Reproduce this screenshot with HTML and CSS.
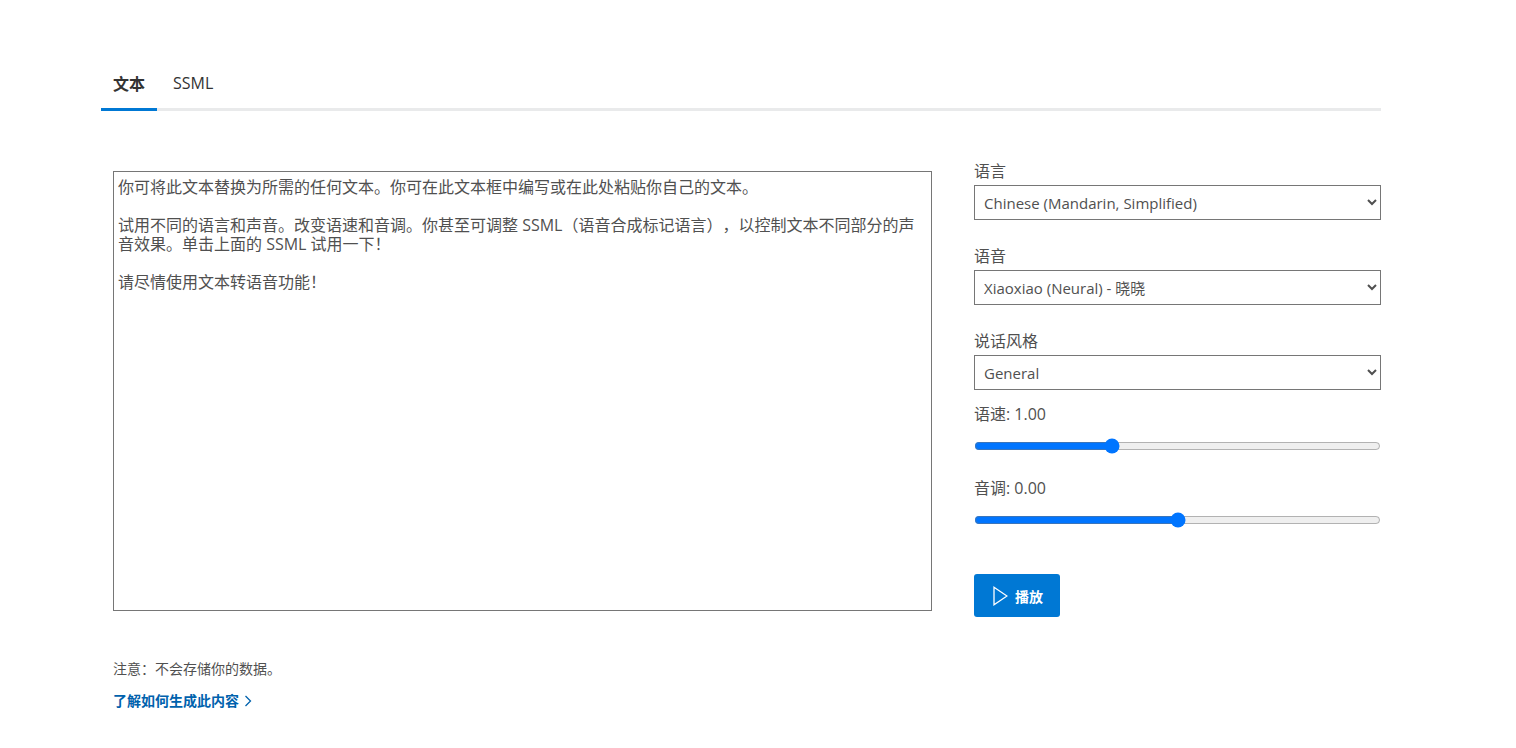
FILE: index.html
```html
<!DOCTYPE html>
<html lang="zh-CN">
<head>
<meta charset="utf-8">
<meta name="viewport" content="width=device-width, initial-scale=1">
<title>文本转语音</title>
<link rel="stylesheet" href="styles.css">
</head>
<body>
<main class="demo">
  <div class="tabs" role="tablist">
    <button class="tab tab-active" type="button" role="tab" aria-selected="true">文本</button>
    <button class="tab" type="button" role="tab" aria-selected="false">SSML</button>
  </div>
  <div class="panel">
    <textarea class="editor" aria-label="文本">你可将此文本替换为所需的任何文本。你可在此文本框中编写或在此处粘贴你自己的文本。

试用不同的语言和声音。改变语速和音调。你甚至可调整 SSML（语音合成标记语言），以控制文本不同部分的声音效果。单击上面的 SSML 试用一下！

请尽情使用文本转语音功能！</textarea>
    <form class="controls">
      <div class="fields">
        <div class="field">
          <label for="language">语言</label>
          <select id="language"><option>Chinese (Mandarin, Simplified)</option></select>
        </div>
        <div class="field">
          <label for="voice">语音</label>
          <select id="voice"><option>Xiaoxiao (Neural) - 晓晓</option></select>
        </div>
        <div class="field">
          <label for="style">说话风格</label>
          <select id="style"><option>General</option></select>
        </div>
      </div>
      <div class="sliders">
        <div class="slider">
          <label for="speed">语速: 1.00</label>
          <input id="speed" type="range" min="0" max="3" step="0.01" value="1">
        </div>
        <div class="slider">
          <label for="pitch">音调: 0.00</label>
          <input id="pitch" type="range" min="-1" max="1" step="0.01" value="0">
        </div>
      </div>
      <button class="play" type="button">
        <svg class="play-icon" viewBox="0 0 16 20" aria-hidden="true"><path d="M2 1.2 15 10 2 18.8Z"/></svg>
        <span>播放</span>
      </button>
    </form>
  </div>
  <div class="notes">
    <p class="note">注意：不会存储你的数据。</p>
    <a class="more" href="#">了解如何生成此内容<svg class="chevron" viewBox="0 0 8 12" aria-hidden="true"><path d="M1.5 1 6.5 6 1.5 11"/></svg></a>
  </div>
</main>
</body>
</html>
```
FILE: styles.css
```css
* {
  box-sizing: border-box;
}

body {
  margin: 0;
  background: #fff;
  color: #505050;
  font-family: "Segoe UI", "Open Sans", "Noto Sans CJK SC", sans-serif;
  font-size: 16px;
  line-height: 20px;
  text-spacing-trim: space-all;
}

button,
select,
textarea {
  font-family: inherit;
}

.demo {
  padding: 60px 135px 0 101px;
}

.tabs {
  display: flex;
  box-shadow: inset 0 -3px #e9eaeb;
}

.tab {
  height: 51px;
  padding: 0 12px 2px;
  border: 0;
  border-bottom: 3px solid transparent;
  background: none;
  color: #333;
  font-size: 16px;
}

.tab + .tab {
  margin-left: 4px;
}

.tab-active {
  border-bottom-color: #0078d4;
  font-weight: 600;
}

.panel {
  display: grid;
  grid-template-columns: minmax(0, 819fr) minmax(0, 407fr);
  gap: 42px;
  padding: 50px 0 0 12px;
}

.editor {
  height: 440px;
  margin-top: 10px;
  padding: 6px 4px;
  border: 1px solid #767676;
  border-radius: 0;
  color: #505050;
  font-size: 16px;
  line-height: 19px;
  text-spacing-trim: space-all;
  resize: none;
}

.controls label {
  display: block;
}

.fields {
  display: grid;
  gap: 26px;
}

.field label {
  margin-bottom: 4px;
}

.field select {
  display: block;
  width: 100%;
  height: 35px;
  padding: 0 5px;
  border: 1px solid #767676;
  border-radius: 0;
  background: #fff;
  color: #505050;
  font-size: 15px;
}

.sliders {
  display: grid;
  gap: 24px;
  margin: 14px 0 46px;
}

.slider input {
  display: block;
  width: 100%;
  margin: 14px 0 0;
}

.play {
  display: flex;
  align-items: center;
  gap: 7px;
  height: 43px;
  padding: 0 17px 0 18px;
  border: 0;
  border-radius: 3px;
  background: #0078d4;
  color: #fff;
  font-size: 14px;
  font-weight: 700;
}

.play-icon {
  width: 16px;
  height: 20px;
  fill: none;
  stroke: #fff;
  stroke-width: 1.3;
}

.notes {
  padding: 42px 0 0 12px;
  font-size: 14px;
}

.note {
  margin: 0 0 12px;
}

.more {
  display: inline-flex;
  align-items: center;
  gap: 5px;
  color: #0062ad;
  font-weight: 700;
  text-decoration: none;
}

.chevron {
  width: 8px;
  height: 12px;
  fill: none;
  stroke: currentColor;
  stroke-width: 1.3;
}
```
